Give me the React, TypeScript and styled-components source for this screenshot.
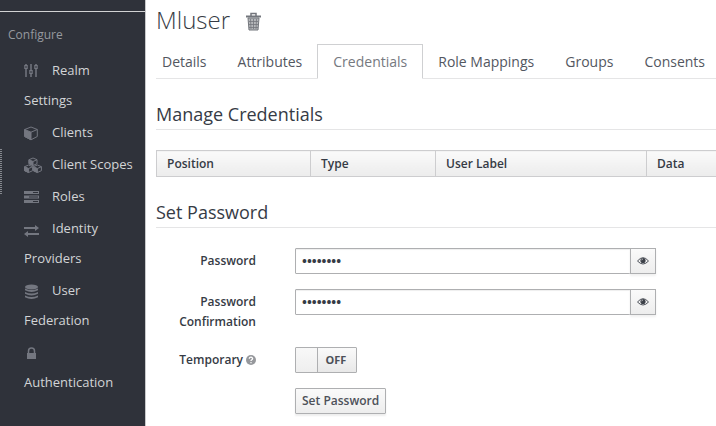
import React, { useState } from "react";
import styled, { createGlobalStyle } from "styled-components";

const GlobalStyle = createGlobalStyle`
  * { box-sizing: border-box; }
  body {
    margin: 0;
    background: #fff;
    color: #363b45;
    font-family: "Open Sans", "Noto Sans", sans-serif;
    font-size: 12px;
    line-height: 20px;
    overflow: hidden;
  }
  button, input { font: inherit; color: inherit; }
`;

const Layout = styled.div`
  display: grid;
  grid-template-columns: 146px minmax(0, 1fr);
  min-height: 100vh;
`;

const Sidebar = styled.aside`
  position: relative;
  background: #2f323a;
  border-right: 1px solid #c8c9cb;
  padding-top: 11px;
`;

const SidebarHandle = styled.span`
  position: absolute;
  left: 0;
  top: 149px;
  width: 2px;
  height: 46px;
  background: repeating-linear-gradient(#85888e 0 1px, #2f323a 1px 2px);
`;

const SidebarTitle = styled.h2`
  margin: 0;
  padding: 12px 8px 9px;
  border-top: 1px solid #d2d3d4;
  color: #96999f;
  font-size: 12px;
  line-height: 22px;
  font-weight: 400;
`;

const NavList = styled.ul`
  display: flex;
  flex-direction: column;
  gap: 2px;
  margin: 0;
  padding: 0 8px 0 24px;
  list-style: none;
`;

const NavLink = styled.a`
  display: block;
  color: #d2d4d6;
  font-size: 13px;
  line-height: 30px;
  text-decoration: none;
`;

const NavIcon = styled.span`
  display: inline-block;
  width: 18px;
  height: 18px;
  margin-right: 10px;
  color: #747780;
  vertical-align: middle;
  svg { display: block; }
`;

const Main = styled.main`
  padding: 0 0 12px 10px;
`;

const TitleRow = styled.div`
  display: flex;
  align-items: center;
  gap: 15px;
  height: 44px;
  padding-bottom: 4px;
`;

const Title = styled.h1`
  margin: 0;
  font-size: 24px;
  line-height: 40px;
  font-weight: 300;
`;

const IconButton = styled.button`
  display: flex;
  padding: 2px 0 0;
  border: 0;
  background: none;
  color: #73767c;
`;

const Tabs = styled.nav`
  display: flex;
  height: 35px;
  border-bottom: 1px solid #e5e5e6;
`;

const Tab = styled.a<{ $active?: boolean }>`
  flex: none;
  height: 35px;
  margin-right: -1px;
  padding: 0 15px;
  border: 1px solid ${(p) => (p.$active ? "#cfd0d2" : "transparent")};
  border-bottom-color: ${(p) => (p.$active ? "#fff" : "transparent")};
  color: ${(p) => (p.$active ? "#767980" : "#53575f")};
  font-size: 14px;
  line-height: 34px;
  text-decoration: none;
  &:first-child { padding-left: 5px; }
`;

const SectionTitle = styled.h2`
  margin: 20px 0;
  padding: 4px 0;
  border-bottom: 1px solid #e5e5e6;
  font-size: 18px;
  line-height: 22px;
  font-weight: 400;
`;

const Table = styled.table`
  width: 100%;
  table-layout: fixed;
  border-collapse: collapse;
`;

const HeadCell = styled.th<{ $width?: string }>`
  width: ${(p) => p.$width || "auto"};
  height: 26px;
  padding: 2px 10px;
  border: 1px solid #cdcdcf;
  border-right-width: ${(p) => (p.$width ? "1px" : "0")};
  background: linear-gradient(#fafafa, #ececec);
  text-align: left;
  font-weight: 600;
`;

const Form = styled.form`
  display: grid;
  grid-template-columns: 100px minmax(0, 361px);
  column-gap: 39px;
  row-gap: 15px;
`;

const Label = styled.label`
  display: flex;
  justify-content: flex-end;
  gap: 3px;
  min-height: 26px;
  padding-top: 3px;
  text-align: right;
  font-weight: 600;
  svg { margin-top: 5px; }
`;

const InputGroup = styled.div`
  display: flex;
  height: 26px;
`;

const PasswordInput = styled.input`
  flex: 1;
  min-width: 0;
  padding: 0 6px;
  border: 1px solid #aeafb1;
  border-radius: 1px 0 0 1px;
  background: #fff;
  font-size: 13px;
  font-weight: 700;
  box-shadow: inset 0 1px 1px #eee;
`;

const RevealButton = styled.button`
  display: flex;
  align-items: center;
  justify-content: center;
  width: 26px;
  margin-left: -1px;
  padding: 0;
  border: 1px solid #aeafb1;
  background: linear-gradient(#fafafa, #ededed);
  box-shadow: 0 2px 2px #f0f0f0;
`;

const Switch = styled.span`
  position: relative;
  display: flex;
  width: 62px;
  height: 26px;
  border: 1px solid #aeafb1;
  border-radius: 1px;
  background: linear-gradient(#fafafa, #e8e8e8);
  font-size: 11px;
  line-height: 24px;
  font-weight: 700;
  color: #4d5159;
`;

const SwitchInput = styled.input`
  position: absolute;
  inset: 0;
  width: 100%;
  height: 100%;
  margin: 0;
  opacity: 0;
`;

const SwitchKnob = styled.span<{ $on: boolean }>`
  order: ${(p) => (p.$on ? 1 : 0)};
  width: 22px;
  border: 0 solid #aeafb1;
  border-width: ${(p) => (p.$on ? "0 0 0 1px" : "0 1px 0 0")};
  background: linear-gradient(#f8f8f8, #eee);
`;

const SwitchText = styled.span`
  flex: 1;
  padding-right: 2px;
  text-align: center;
`;

const SubmitButton = styled.button`
  grid-column: 2;
  justify-self: start;
  height: 26px;
  padding: 0 6px;
  border: 1px solid #aeafb1;
  border-radius: 1px;
  background: linear-gradient(#fafafa, #ededed);
  box-shadow: 0 2px 2px #eee;
  color: #4d5159;
  font-weight: 600;
`;

const SlidersIcon = () => (
  <svg width="14" height="16" viewBox="0 0 14 16" fill="none" stroke="currentColor">
    <path d="M2 1v13M7 1v13M12 1v13" strokeWidth="1.5" />
    <path d="M2 2v4M7 7v4M12 2v4" strokeWidth="3.5" />
    <path d="M2 3v2M7 8v2M12 3v2" stroke="#2f323a" />
  </svg>
);

const CubeIcon = () => (
  <svg width="14" height="17" viewBox="0 0 14 17" fill="none" stroke="currentColor" strokeLinejoin="round">
    <path d="M7 2l6.300 2.500v7L7 14.800.700 11.500v-7z" />
    <path d="M.700 4.500L7 7.200v7.600L.700 11.500z" fill="currentColor" />
    <path d="M7 7.200l6.300-2.700" />
  </svg>
);

const CubesIcon = () => (
  <svg width="18" height="17" viewBox="0 0 18 17" fill="none" stroke="currentColor" strokeLinejoin="round">
    <path d="M9 1l4 1.700v4L9 8.500 5 6.700v-4zM4.600 8l4 1.700v4l-4 1.800-4-1.800v-4zM13.400 8l4 1.700v4l-4 1.800-4-1.800v-4z" />
    <path d="M5 2.700l4 1.800v4L5 6.700zM.600 9.700l4 1.800v4l-4-1.800zM9.400 9.700l4 1.800v4l-4-1.800z" fill="currentColor" />
    <path d="M9 4.500l4-1.800M4.600 11.500l4-1.800M13.400 11.500l4-1.800" />
  </svg>
);

const RolesIcon = () => (
  <svg width="16" height="16" viewBox="0 0 16 16" fill="currentColor">
    <path d="M0 2h15v3H0zM0 6.500h15v3H0zM0 11h15v3H0z" />
    <path d="M9 3.500h5M5 8h9M9 12.500h5" stroke="#2f323a" />
  </svg>
);

const ExchangeIcon = () => (
  <svg width="16" height="17" viewBox="0 0 16 17" fill="currentColor">
    <path d="M0 6h11V4l4 3-4 3V8H0zM15 12H4v-2l-4 3 4 3v-2h11z" />
  </svg>
);

const DatabaseIcon = () => (
  <svg width="14" height="17" viewBox="0 0 14 17" fill="currentColor">
    <ellipse cx="7.5" cy="4" rx="6.5" ry="2.4" />
    <path d="M1 5.500q6.500 3 13 0v1.700q-6.500 3.500-13 0zM1 9q6.500 3.200 13 0v1.700q-6.500 3.500-13 0zM1 12.500q6.500 3.200 13 0v1.700q-6.500 3.500-13 0z" />
  </svg>
);

const LockIcon = () => (
  <svg width="14" height="16" viewBox="0 0 14 16" fill="none" stroke="currentColor">
    <path d="M4.500 9V6q0-3 3-3t3 3v3" strokeWidth="1.500" />
    <path d="M3 8h9v6H3z" fill="currentColor" stroke="none" />
  </svg>
);

const TrashIcon = () => (
  <svg width="17" height="19" viewBox="0 0 17 19" fill="none" stroke="currentColor">
    <path d="M1 4.500h15" strokeWidth="2" />
    <path d="M6 4V1.500h5V4" strokeWidth="1.500" />
    <path d="M3 6h11l-1 12H4z" fill="#b5b7ba" />
    <path d="M5.500 7l.5 10M8.500 7v10M11.500 7l-.5 10M4 9.500h9M4 12.500h9M4 15.500h9" strokeWidth=".8" />
  </svg>
);

const EyeIcon = () => (
  <svg width="12" height="10" viewBox="0 0 12 10" fill="none" stroke="#4d5159">
    <path d="M.5 5Q6-1.600 11.500 5 6 11 .5 5z" />
    <circle cx="6" cy="4.500" r="2.600" fill="#3b3f47" stroke="none" />
    <path d="M4.700 4.300Q4.700 3 6 3" stroke="#d8d8d8" strokeWidth=".7" />
  </svg>
);

const HelpIcon = () => (
  <svg width="10" height="10" viewBox="0 0 10 10" role="img" aria-label="Help">
    <circle cx="5" cy="5" r="5" fill="#96989c" />
    <path d="M3.300 3.800C3.300 1.600 6.800 1.800 6.600 3.800 6.500 4.800 5 4.700 5 6" fill="none" stroke="#fff" strokeWidth="1.300" />
    <path d="M4.400 7h1.200v1.200H4.400z" fill="#fff" />
  </svg>
);

const navItems = [
  { label: "Realm Settings", icon: <SlidersIcon /> },
  { label: "Clients", icon: <CubeIcon /> },
  { label: "Client Scopes", icon: <CubesIcon /> },
  { label: "Roles", icon: <RolesIcon /> },
  { label: "Identity Providers", icon: <ExchangeIcon /> },
  { label: "User Federation", icon: <DatabaseIcon /> },
  { label: "Authentication", icon: <LockIcon /> },
];

const tabs = ["Details", "Attributes", "Credentials", "Role Mappings", "Groups", "Consents"];

const PasswordField = ({ id, label }: { id: string; label: string }) => {
  const [value, setValue] = useState("password");
  const [visible, setVisible] = useState(false);
  return (
    <>
      <Label htmlFor={id}>{label}</Label>
      <InputGroup>
        <PasswordInput
          id={id}
          type={visible ? "text" : "password"}
          value={value}
          onChange={(e) => setValue(e.target.value)}
        />
        <RevealButton type="button" aria-label={`Show ${label}`} onClick={() => setVisible(!visible)}>
          <EyeIcon />
        </RevealButton>
      </InputGroup>
    </>
  );
};

export default function App() {
  const [temporary, setTemporary] = useState(false);
  return (
    <>
      <GlobalStyle />
      <Layout>
        <Sidebar>
          <SidebarHandle />
          <SidebarTitle>Configure</SidebarTitle>
          <NavList>
            {navItems.map((item) => (
              <li key={item.label}>
                <NavLink href="#">
                  <NavIcon>{item.icon}</NavIcon>
                  {item.label}
                </NavLink>
              </li>
            ))}
          </NavList>
        </Sidebar>
        <Main>
          <TitleRow>
            <Title>Mluser</Title>
            <IconButton type="button" aria-label="Delete user">
              <TrashIcon />
            </IconButton>
          </TitleRow>
          <Tabs>
            {tabs.map((tab) => (
              <Tab key={tab} href="#" $active={tab === "Credentials"}>
                {tab}
              </Tab>
            ))}
          </Tabs>
          <SectionTitle>Manage Credentials</SectionTitle>
          <Table>
            <thead>
              <tr>
                <HeadCell $width="154px">Position</HeadCell>
                <HeadCell $width="125px">Type</HeadCell>
                <HeadCell $width="211px">User Label</HeadCell>
                <HeadCell>Data</HeadCell>
              </tr>
            </thead>
          </Table>
          <SectionTitle>Set Password</SectionTitle>
          <Form onSubmit={(e) => e.preventDefault()}>
            <PasswordField id="password" label="Password" />
            <PasswordField id="confirmation" label="Password Confirmation" />
            <Label htmlFor="temporary">
              Temporary <HelpIcon />
            </Label>
            <Switch>
              <SwitchKnob $on={temporary} />
              <SwitchText>{temporary ? "ON" : "OFF"}</SwitchText>
              <SwitchInput
                id="temporary"
                type="checkbox"
                role="switch"
                checked={temporary}
                onChange={(e) => setTemporary(e.target.checked)}
              />
            </Switch>
            <SubmitButton type="submit">Set Password</SubmitButton>
          </Form>
        </Main>
      </Layout>
    </>
  );
}
